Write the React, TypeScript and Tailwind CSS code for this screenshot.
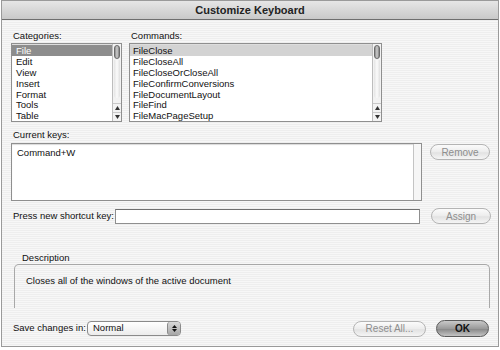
import React from "react";

const font = { fontFamily: '"Liberation Sans", Arial, sans-serif' };

function Scrollbar() {
  return (
    <div className="w-[9px] flex flex-col border-l border-[#bdbdbd] bg-[#f2f2f2]">
      <div className="flex-1 pt-[1px] px-[1px]">
        <div className="h-[14px] rounded-[4px] bg-[linear-gradient(90deg,#8a8a8a,#cfcfcf_50%,#7e7e7e)] border border-[#6a6a6a]" />
        <div className="mt-[1px] h-[calc(100%-20px)] rounded-b-[4px] bg-[linear-gradient(90deg,#e4e4e4,#fbfbfb_50%,#e0e0e0)]" />
      </div>
      <div className="h-[9px] flex items-center justify-center border-t border-[#c8c8c8]">
        <svg width="5" height="4" viewBox="0 0 5 4"><path d="M2.5 0 L5 4 L0 4Z" fill="#333" /></svg>
      </div>
      <div className="h-[9px] flex items-center justify-center border-t border-[#c8c8c8]">
        <svg width="5" height="4" viewBox="0 0 5 4"><path d="M0 0 L5 0 L2.5 4Z" fill="#333" /></svg>
      </div>
    </div>
  );
}

function AquaButton({ label, w, def = false }: { label: string; w: string; def?: boolean }) {
  if (def) {
    return (
      <div className={`${w} h-[17px] rounded-full border border-[#5a5a5a] bg-[linear-gradient(180deg,#c9c9c9,#9b9b9b_50%,#8a8a8a_55%,#c4c4c4)] flex items-center justify-center text-[10px] font-bold text-[#111]`}>
        {label}
      </div>
    );
  }
  return (
    <div className={`${w} h-[16px] rounded-full border border-[#b4b4b4] bg-[linear-gradient(180deg,#fbfbfb,#ececec_50%,#e2e2e2_55%,#f5f5f5)] flex items-center justify-center text-[10px] text-[#8e8e8e]`}>
      {label}
    </div>
  );
}

export default function App() {
  const cats = ["File", "Edit", "View", "Insert", "Format", "Tools", "Table"];
  const cmds = [
    "FileClose",
    "FileCloseAll",
    "FileCloseOrCloseAll",
    "FileConfirmConversions",
    "FileDocumentLayout",
    "FileFind",
    "FileMacPageSetup",
  ];
  return (
    <div style={font} className="w-[500px] h-[350px] bg-white overflow-hidden text-[#111]">
      <div className="w-[498px] h-[347px] ml-[1px] border border-[#9a9a9a] flex flex-col bg-[repeating-linear-gradient(180deg,#f7f7f7_0px,#f7f7f7_1px,#eeeeee_1px,#eeeeee_2px)]">
        <div className="h-[19px] shrink-0 flex items-center justify-center border-b border-[#6f6f6f] bg-[linear-gradient(180deg,#e6e6e6,#c9c9c9)] text-[11px] font-bold text-[#222]">
          Customize Keyboard
        </div>

        <div className="flex pl-[9px] pt-[10px] gap-[7px]">
          <div className="flex flex-col">
            <div className="text-[9.5px] h-[13px] pl-[2px] leading-[11px]">Categories:</div>
            <div className="w-[111px] h-[79px] border border-[#8f8f8f] bg-white flex shadow-[inset_0_1px_1px_rgba(0,0,0,0.15)]">
              <div className="flex-1 pt-[1px]">
                {cats.map((c, i) => (
                  <div
                    key={c}
                    className={`h-[10.9px] leading-[11px] pl-[4px] text-[9.5px] ${i === 0 ? "bg-[#8d8d8d] text-white" : ""}`}
                  >
                    {c}
                  </div>
                ))}
              </div>
              <Scrollbar />
            </div>
          </div>
          <div className="flex flex-col">
            <div className="text-[9.5px] h-[13px] pl-[2px] leading-[11px]">Commands:</div>
            <div className="w-[253px] h-[79px] border border-[#8f8f8f] bg-white flex shadow-[inset_0_1px_1px_rgba(0,0,0,0.15)]">
              <div className="flex-1 pt-[1px]">
                {cmds.map((c, i) => (
                  <div
                    key={c}
                    className={`h-[10.9px] leading-[11px] pl-[3px] text-[9.5px] ${i === 0 ? "bg-[#d3d3d3]" : ""}`}
                  >
                    {c}
                  </div>
                ))}
              </div>
              <Scrollbar />
            </div>
          </div>
        </div>

        <div className="pl-[11px] pt-[7px] text-[9.5px] h-[21px] leading-[11px]">Current keys:</div>
        <div className="flex pl-[9px] items-start">
          <div className="w-[411px] h-[58px] border border-[#8f8f8f] bg-white flex shadow-[inset_0_1px_1px_rgba(0,0,0,0.15)]">
            <div className="flex-1 pl-[5px] pt-[2px] text-[9.5px]">Command+W</div>
            <div className="w-[8px] border-l border-[#c4c4c4] bg-[#f6f6f6]" />
          </div>
          <div className="ml-[8px] mt-[1px]">
            <AquaButton label="Remove" w="w-[60px]" />
          </div>
        </div>

        <div className="flex pl-[11px] items-center mt-[7px] h-[16px]">
          <div className="text-[9.5px] w-[102px]">Press new shortcut key:</div>
          <div className="w-[305px] h-[15px] border border-[#8f8f8f] border-t-[#6f6f6f] bg-white" />
          <div className="ml-[11px]">
            <AquaButton label="Assign" w="w-[60px]" />
          </div>
        </div>

        <div className="pl-[20px] pt-[28px] text-[9.5px] h-[40px] leading-[11px]">Description</div>
        <div className="ml-[12px] w-[476px] h-[44px] border border-[#a8a8a8] rounded-t-[5px] border-b-0 pl-[11px] pt-[9px] text-[9.5px]">
          Closes all of the windows of the active document
        </div>

        <div className="flex items-center pl-[11px] mt-[12px] h-[17px]">
          <div className="text-[9.5px] w-[74px]">Save changes in:</div>
          <div className="w-[94px] h-[15px] rounded-[4px] border border-[#8a8a8a] bg-[linear-gradient(180deg,#ffffff,#ececec)] flex items-center text-[9.5px] pl-[5px]">
            <span className="flex-1">Normal</span>
            <div className="w-[13px] h-[13px] rounded-[3px] bg-[linear-gradient(180deg,#d8d8d8,#a6a6a6)] border-l border-[#8a8a8a] flex flex-col items-center justify-center gap-[1px]">
              <svg width="5" height="3" viewBox="0 0 5 3"><path d="M2.5 0 L5 3 L0 3Z" fill="#111" /></svg>
              <svg width="5" height="3" viewBox="0 0 5 3"><path d="M0 0 L5 0 L2.5 3Z" fill="#111" /></svg>
            </div>
          </div>
          <div className="flex-1" />
          <AquaButton label="Reset All..." w="w-[73px]" />
          <div className="ml-[10px] mr-[9px]">
            <AquaButton label="OK" w="w-[53px]" def />
          </div>
        </div>
      </div>
    </div>
  );
}
